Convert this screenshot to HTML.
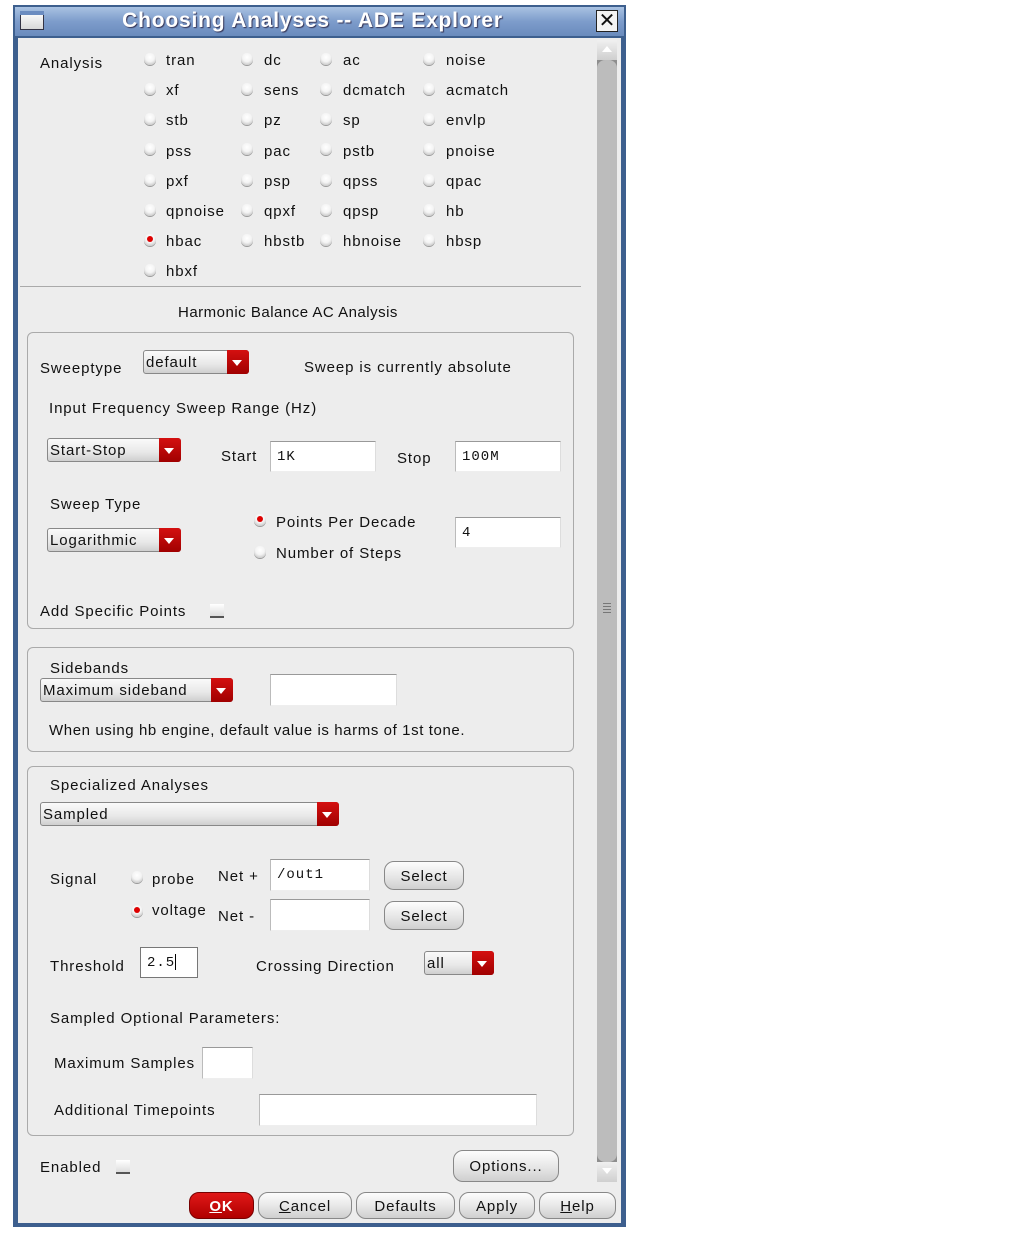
<!DOCTYPE html>
<html><head><meta charset="utf-8"><style>
body{margin:0;width:1013px;height:1235px;background:#fff;position:relative;overflow:hidden;font-family:"Liberation Sans","DejaVu Sans",sans-serif;}
.a{position:absolute}
.t{position:absolute;font-size:15px;line-height:18px;color:#111;white-space:nowrap;letter-spacing:0.9px;margin-top:1px}
.r{position:absolute;width:12px;height:12px;border-radius:50%;background:radial-gradient(circle at 50% 35%,#fff 0%,#f4f4f4 45%,#bdbdbd 90%);box-shadow:0 1px 0 #9a9a9a}
.r.on::after{content:"";position:absolute;left:3px;top:2px;width:6px;height:6px;border-radius:50%;background:#d00}
.dd{position:absolute;height:24px;border:1px solid #888;border-radius:3px;background:linear-gradient(#fafafa,#e8e8e8 60%,#cfcfcf);box-sizing:border-box;font-size:15px;line-height:24px;padding-left:2px;color:#111;letter-spacing:0.9px}
.dd::after{content:"";position:absolute;right:-1px;top:-1px;width:22px;height:24px;background:linear-gradient(#d41010,#a00000);border-radius:0 3px 3px 0}
.dd i{position:absolute;right:6px;top:9px;width:0;height:0;border-left:5px solid transparent;border-right:5px solid transparent;border-top:6px solid #fff;z-index:2}
.in{position:absolute;background:#fff;border-top:1px solid #999;border-left:1px solid #bbb;border-right:1px solid #ddd;border-bottom:1px solid #eee;box-sizing:border-box;font-family:"Liberation Mono",monospace;font-size:14px;line-height:30px;padding-left:6px;color:#111;letter-spacing:1px}
.b{position:absolute;height:26px;border:1px solid #888;border-radius:10px;background:linear-gradient(#fdfdfd,#e6e6e6 55%,#cfcfcf);box-sizing:border-box;text-align:center;font-size:15px;line-height:26px;color:#111;letter-spacing:0.9px}
.grp{position:absolute;border:1px solid #aaa;border-radius:6px;box-sizing:border-box}
.cb{position:absolute;width:14px;height:12px;background:linear-gradient(#fff,#ddd);border-bottom:2px solid #555}
</style></head><body>
<div class="a" style="left:13px;top:5px;width:613px;height:1222px;background:#3d5f8e"></div>
<div class="a" style="left:15px;top:7px;width:609px;height:29px;background:linear-gradient(#a9c2e2,#7d9ccb 50%,#6a8bbd)"></div>
<div class="a" style="left:20px;top:11px;width:22px;height:17px;background:linear-gradient(#fff,#d8d8d8);border:1px solid #334"></div>
<div class="a" style="left:20px;top:11px;width:24px;height:4px;background:#6b8cc0"></div>
<div class="a" style="left:6px;top:7px;width:613px;text-align:center;font-weight:bold;font-size:21px;letter-spacing:0.8px;line-height:27px;color:#fff;text-shadow:1px 1px 1px #335">Choosing Analyses -- ADE Explorer</div>
<div class="a" style="left:596px;top:10px;width:20px;height:20px;background:#f4f4f4;border:1px solid #222;font-size:20px;line-height:20px;text-align:center;color:#111">✕</div>
<div class="a" style="left:18px;top:38px;width:603px;height:1185px;background:#ededed"></div>
<div class="a" style="left:597px;top:40px;width:20px;height:1142px;background:#8e8e8e"></div>
<div class="a" style="left:597px;top:40px;width:20px;height:20px;background:linear-gradient(#f0f0f0,#cfcfcf)"></div>
<div class="a" style="left:602px;top:46px;border-left:5px solid transparent;border-right:5px solid transparent;border-bottom:6px solid #fff"></div>
<div class="a" style="left:597px;top:60px;width:20px;height:1102px;background:#bcbcbc;border-radius:8px"></div>
<div class="a" style="left:597px;top:1162px;width:20px;height:20px;background:linear-gradient(#f0f0f0,#cfcfcf)"></div>
<div class="a" style="left:602px;top:1168px;border-left:5px solid transparent;border-right:5px solid transparent;border-top:6px solid #fff"></div>
<div class="a" style="left:603px;top:603px;width:8px;height:10px;background:repeating-linear-gradient(#777 0 1px,transparent 1px 3px)"></div>

<div class="t" style="left:40px;top:54px">Analysis</div>
<div class="r" style="left:144px;top:53px"></div><div class="t" style="left:166px;top:51px">tran</div>
<div class="r" style="left:241px;top:53px"></div><div class="t" style="left:264px;top:51px">dc</div>
<div class="r" style="left:320px;top:53px"></div><div class="t" style="left:343px;top:51px">ac</div>
<div class="r" style="left:423px;top:53px"></div><div class="t" style="left:446px;top:51px">noise</div>

<div class="r" style="left:144px;top:83px"></div><div class="t" style="left:166px;top:81px">xf</div>
<div class="r" style="left:241px;top:83px"></div><div class="t" style="left:264px;top:81px">sens</div>
<div class="r" style="left:320px;top:83px"></div><div class="t" style="left:343px;top:81px">dcmatch</div>
<div class="r" style="left:423px;top:83px"></div><div class="t" style="left:446px;top:81px">acmatch</div>

<div class="r" style="left:144px;top:113px"></div><div class="t" style="left:166px;top:111px">stb</div>
<div class="r" style="left:241px;top:113px"></div><div class="t" style="left:264px;top:111px">pz</div>
<div class="r" style="left:320px;top:113px"></div><div class="t" style="left:343px;top:111px">sp</div>
<div class="r" style="left:423px;top:113px"></div><div class="t" style="left:446px;top:111px">envlp</div>

<div class="r" style="left:144px;top:143px"></div><div class="t" style="left:166px;top:142px">pss</div>
<div class="r" style="left:241px;top:143px"></div><div class="t" style="left:264px;top:142px">pac</div>
<div class="r" style="left:320px;top:143px"></div><div class="t" style="left:343px;top:142px">pstb</div>
<div class="r" style="left:423px;top:143px"></div><div class="t" style="left:446px;top:142px">pnoise</div>

<div class="r" style="left:144px;top:174px"></div><div class="t" style="left:166px;top:172px">pxf</div>
<div class="r" style="left:241px;top:174px"></div><div class="t" style="left:264px;top:172px">psp</div>
<div class="r" style="left:320px;top:174px"></div><div class="t" style="left:343px;top:172px">qpss</div>
<div class="r" style="left:423px;top:174px"></div><div class="t" style="left:446px;top:172px">qpac</div>

<div class="r" style="left:144px;top:204px"></div><div class="t" style="left:166px;top:202px">qpnoise</div>
<div class="r" style="left:241px;top:204px"></div><div class="t" style="left:264px;top:202px">qpxf</div>
<div class="r" style="left:320px;top:204px"></div><div class="t" style="left:343px;top:202px">qpsp</div>
<div class="r" style="left:423px;top:204px"></div><div class="t" style="left:446px;top:202px">hb</div>

<div class="r on" style="left:144px;top:234px"></div><div class="t" style="left:166px;top:232px">hbac</div>
<div class="r" style="left:241px;top:234px"></div><div class="t" style="left:264px;top:232px">hbstb</div>
<div class="r" style="left:320px;top:234px"></div><div class="t" style="left:343px;top:232px">hbnoise</div>
<div class="r" style="left:423px;top:234px"></div><div class="t" style="left:446px;top:232px">hbsp</div>

<div class="r" style="left:144px;top:264px"></div><div class="t" style="left:166px;top:262px">hbxf</div>

<div class="a" style="left:20px;top:286px;width:561px;height:1px;background:#aaa"></div>
<div class="t" style="left:178px;top:303px;letter-spacing:0.5px">Harmonic Balance AC Analysis</div>

<div class="grp" style="left:27px;top:332px;width:547px;height:297px"></div>
<div class="t" style="left:40px;top:359px">Sweeptype</div>
<div class="dd" style="left:143px;top:350px;width:106px">default<i></i></div>
<div class="t" style="left:304px;top:358px">Sweep is currently absolute</div>
<div class="t" style="left:49px;top:399px">Input Frequency Sweep Range (Hz)</div>
<div class="dd" style="left:47px;top:438px;width:134px">Start-Stop<i></i></div>
<div class="t" style="left:221px;top:447px">Start</div>
<div class="in" style="left:270px;top:441px;width:106px;height:31px">1K</div>
<div class="t" style="left:397px;top:449px">Stop</div>
<div class="in" style="left:455px;top:441px;width:106px;height:31px">100M</div>
<div class="t" style="left:50px;top:495px">Sweep Type</div>
<div class="dd" style="left:47px;top:528px;width:134px">Logarithmic<i></i></div>
<div class="r on" style="left:254px;top:514px"></div><div class="t" style="left:276px;top:513px">Points Per Decade</div>
<div class="r" style="left:254px;top:546px"></div><div class="t" style="left:276px;top:544px">Number of Steps</div>
<div class="in" style="left:455px;top:517px;width:106px;height:31px">4</div>
<div class="t" style="left:40px;top:602px">Add Specific Points</div>
<div class="cb" style="left:210px;top:604px"></div>

<div class="grp" style="left:27px;top:647px;width:547px;height:105px"></div>
<div class="t" style="left:50px;top:659px">Sidebands</div>
<div class="dd" style="left:40px;top:678px;width:193px">Maximum sideband<i></i></div>
<div class="in" style="left:270px;top:674px;width:127px;height:32px"></div>
<div class="t" style="left:49px;top:721px;letter-spacing:0.6px">When using hb engine, default value is harms of 1st tone.</div>

<div class="grp" style="left:27px;top:766px;width:547px;height:370px"></div>
<div class="t" style="left:50px;top:776px">Specialized Analyses</div>
<div class="dd" style="left:40px;top:802px;width:299px">Sampled<i></i></div>
<div class="t" style="left:50px;top:870px">Signal</div>
<div class="r" style="left:131px;top:871px"></div><div class="t" style="left:152px;top:870px">probe</div>
<div class="r on" style="left:131px;top:905px"></div><div class="t" style="left:152px;top:901px">voltage</div>
<div class="t" style="left:218px;top:867px">Net +</div>
<div class="t" style="left:218px;top:907px">Net -</div>
<div class="in" style="left:270px;top:859px;width:100px;height:32px">/out1</div>
<div class="in" style="left:270px;top:899px;width:100px;height:32px"></div>
<div class="b" style="left:384px;top:861px;width:80px;height:29px;line-height:29px">Select</div>
<div class="b" style="left:384px;top:901px;width:80px;height:29px;line-height:29px">Select</div>
<div class="t" style="left:50px;top:957px">Threshold</div>
<div class="in" style="left:140px;top:947px;width:58px;height:31px;border:1px solid #777">2.5<span style="display:inline-block;width:1px;height:16px;background:#000;vertical-align:middle"></span></div>
<div class="t" style="left:256px;top:957px">Crossing Direction</div>
<div class="dd" style="left:424px;top:951px;width:70px">all<i></i></div>
<div class="t" style="left:50px;top:1009px">Sampled Optional Parameters:</div>
<div class="t" style="left:54px;top:1054px">Maximum Samples</div>
<div class="in" style="left:202px;top:1047px;width:51px;height:32px"></div>
<div class="t" style="left:54px;top:1101px">Additional Timepoints</div>
<div class="in" style="left:259px;top:1094px;width:278px;height:32px"></div>

<div class="t" style="left:40px;top:1158px">Enabled</div>
<div class="cb" style="left:116px;top:1160px"></div>
<div class="b" style="left:453px;top:1150px;width:106px;height:32px;line-height:32px">Options...</div>

<div class="b" style="left:189px;top:1192px;width:65px;height:27px;line-height:28px;background:linear-gradient(#e01818,#b00000);border-color:#700;color:#fff;font-weight:bold"><u>O</u>K</div>
<div class="b" style="left:258px;top:1192px;width:94px;height:27px;line-height:28px"><u>C</u>ancel</div>
<div class="b" style="left:356px;top:1192px;width:99px;height:27px;line-height:28px">Defaults</div>
<div class="b" style="left:459px;top:1192px;width:76px;height:27px;line-height:28px">Apply</div>
<div class="b" style="left:539px;top:1192px;width:77px;height:27px;line-height:28px"><u>H</u>elp</div>
</body></html>
